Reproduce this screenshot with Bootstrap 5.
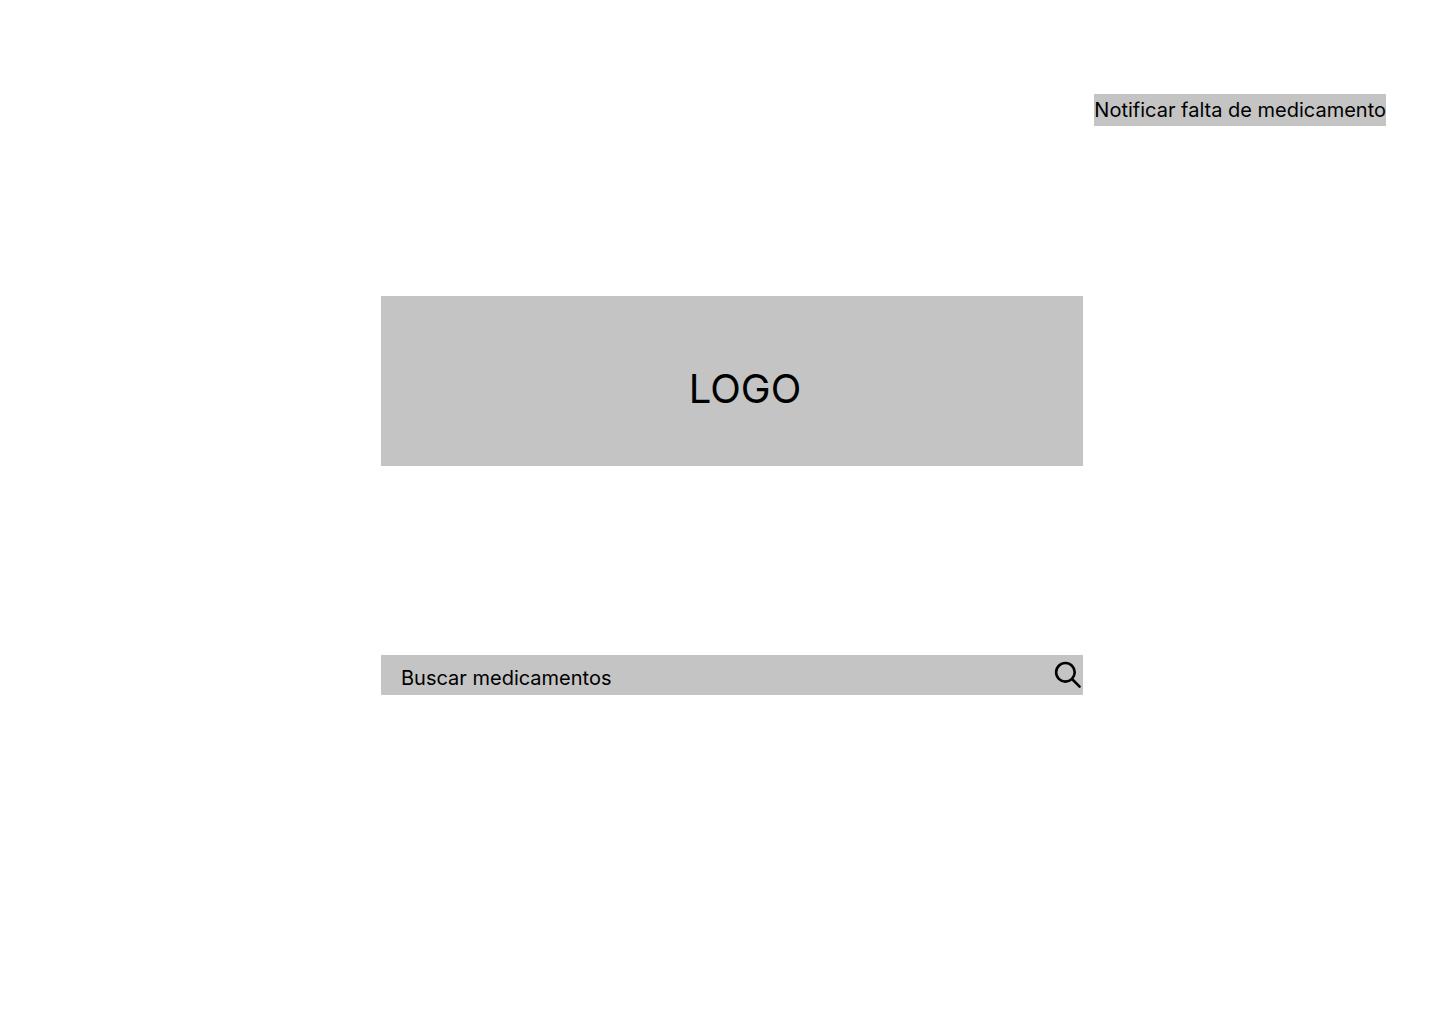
<!DOCTYPE html>
<html lang="pt-BR">
<head>
<meta charset="utf-8">
<meta name="viewport" content="width=device-width, initial-scale=1">
<title>Buscar medicamentos</title>
<link href="https://cdn.jsdelivr.net/npm/bootstrap@5.3.0/dist/css/bootstrap.min.css" rel="stylesheet">
<style>
  body { font-family: Inter, "Liberation Sans", sans-serif; color: #000; background: #fff; }
  .tile { background: #c4c4c4; color: #000; border-radius: 0; }
  .site-top { padding: 94px 54px 0; }
  .notify-btn, .search-input, .search-input:focus { font-size: 20px; line-height: 24px; }
  .notify-btn { padding: 4px 0; border: 0; }
  .notify-btn:hover { background: #b4b4b4; color: #000; }
  .site-main { padding: 170px 0 0 24px; }
  .search-panel { width: 100%; max-width: 702px; }
  .logo-box { min-height: 170px; padding: 16px 0 0 26px; font-size: 40px; line-height: 48px; }
  .search-bar { margin-top: 189px; min-height: 40px; }
  .search-input, .search-input:focus { background: transparent; border: 0; box-shadow: none; color: #000; padding: 11px 20px 5px; }
  .search-input::placeholder { color: #000; opacity: 1; }
  .search-btn { padding: 0 1px 0 0; border: 0; line-height: 0; border-radius: 0; }
</style>
<script defer src="https://cdn.jsdelivr.net/npm/bootstrap@5.3.0/dist/js/bootstrap.bundle.min.js"></script>
</head>
<body>
<header class="site-top d-flex justify-content-end">
  <button type="button" class="btn tile notify-btn">Notificar falta de medicamento</button>
</header>
<main class="site-main">
  <div class="search-panel mx-auto">
    <h1 class="tile logo-box d-flex align-items-center justify-content-center fw-normal mb-0">LOGO</h1>
    <form class="tile search-bar d-flex align-items-center" role="search">
      <input id="busca" type="text" class="form-control search-input" placeholder="Buscar medicamentos" aria-label="Buscar medicamentos">
      <button type="submit" class="btn search-btn" aria-label="Buscar">
        <svg width="28" height="28" viewBox="0 0 28 28" fill="none" stroke="#000" stroke-width="2.6" stroke-linecap="round" aria-hidden="true">
          <circle cx="11.4" cy="11.3" r="9.3"/>
          <path d="M18 18l7.6 7.6"/>
        </svg>
      </button>
    </form>
  </div>
</main>
</body>
</html>
